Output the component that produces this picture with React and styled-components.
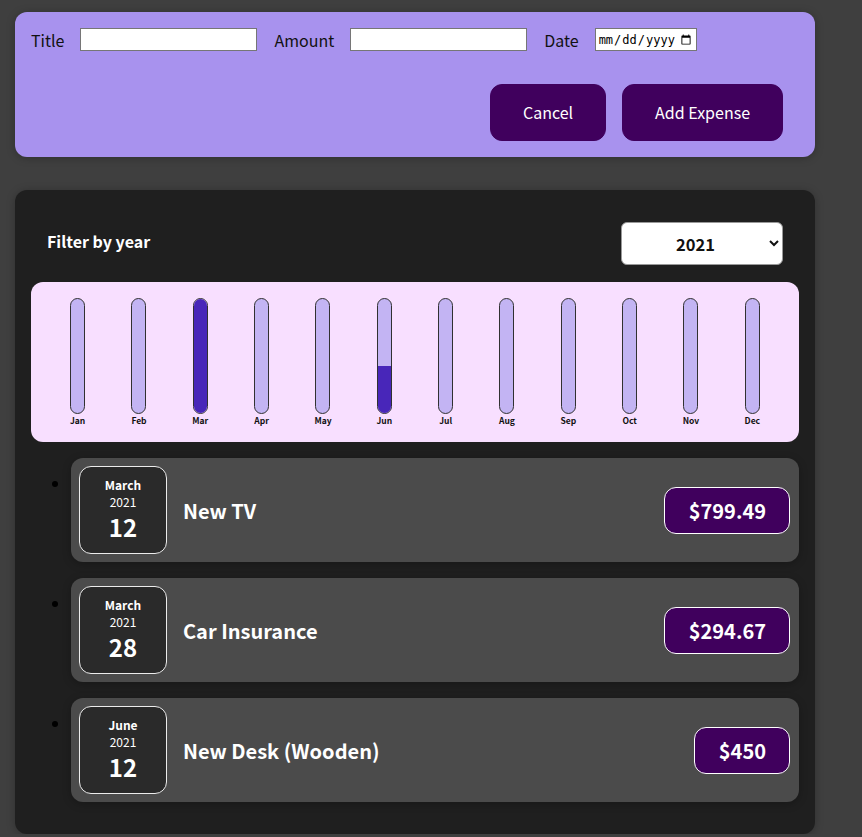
import React from "react";
import styled, { createGlobalStyle } from "styled-components";

const GlobalStyle = createGlobalStyle`
  * { box-sizing: border-box; }
  body {
    margin: 0;
    background: #3f3f3f;
    font-family: "Noto Sans CJK JP", "Noto Sans", sans-serif;
  }
`;

const Page = styled.div`
  width: 800px;
  margin: 12px 0 0 15px;
  display: flex;
  flex-direction: column;
  gap: 33px;
`;

const Card = styled.div`
  border-radius: 12px;
  box-shadow: 0 1px 8px rgba(0, 0, 0, 0.25);
  padding: 16px;
  background: ${p => p.$bg};
`;

const Controls = styled.div`
  display: flex;
  align-items: center;
  gap: 17px;
  height: 23px;
`;

const Control = styled.label`
  display: flex;
  align-items: center;
  gap: 16px;
  font-size: 16px;
  line-height: 23px;
  color: #111;
  padding-top: 2px;
`;

const Input = styled.input`
  height: 23px;
  width: ${p => p.$w}px;
  border: 1px solid #767676;
  background: white;
  padding: 1px 2px;
  font-size: 12px;
  margin-top: -2px;
`;

const Actions = styled.div`
  display: flex;
  justify-content: flex-end;
  gap: 16px;
  margin-top: 33px;
  padding-right: 16px;
`;

const Button = styled.button`
  font-family: inherit;
  font-size: 16px;
  line-height: 25px;
  height: 57px;
  padding: 0 32px;
  background: #40005d;
  border: 1px solid #40005d;
  color: white;
  border-radius: 12px;
  cursor: pointer;
`;

const FilterRow = styled.div`
  display: flex;
  justify-content: space-between;
  align-items: center;
  padding: 0 16px;
  margin: 16px 0 17px;
  color: white;
`;

const FilterLabel = styled.span`
  font-weight: bold;
  font-size: 16px;
  padding-bottom: 5px;
`;

const Select = styled.select`
  width: 162px;
  height: 43px;
  font-family: inherit;
  font-size: 16.5px;
  font-weight: bold;
  padding: 0 30px 0 50px;
  border-radius: 6px;
  border: 1px solid #999;
  background: white;
  color: #111;
`;

const Chart = styled.div`
  height: 160px;
  padding: 16px;
  border-radius: 12px;
  background: #f8dfff;
  display: grid;
  grid-template-columns: repeat(12, 1fr);
`;

const BarCol = styled.div`
  display: flex;
  flex-direction: column;
  align-items: center;
  height: 100%;
`;

const BarTrack = styled.div`
  flex: 1;
  width: 15px;
  border: 1px solid #313131;
  border-radius: 12px;
  background: #c3b4f3;
  overflow: hidden;
  display: flex;
  flex-direction: column;
  justify-content: flex-end;
`;

const BarFill = styled.div`
  width: 100%;
  background: #4826b9;
`;

const BarLabel = styled.div`
  font-weight: bold;
  font-size: 8.5px;
  line-height: 12px;
  color: #111;
`;

const List = styled.ul`
  margin: 16px 0;
  padding-left: 40px;
`;

const Item = styled.li`
  margin: 16px 0;
`;

const ItemCard = styled.div`
  display: flex;
  align-items: center;
  gap: 16px;
  padding: 8px;
  height: 104px;
  background: #4b4b4b;
  border-radius: 12px;
  box-shadow: 0 2px 8px rgba(0, 0, 0, 0.25);
`;

const DateBox = styled.div`
  width: 88px;
  height: 88px;
  flex-shrink: 0;
  display: flex;
  flex-direction: column;
  justify-content: center;
  align-items: center;
  border: 1px solid #ececec;
  border-radius: 12px;
  background: #2a2a2a;
  color: white;
`;

const Month = styled.div`
  font-size: 12px;
  font-weight: bold;
  line-height: 17px;
`;

const Year = styled.div`
  font-size: 12px;
  line-height: 17px;
`;

const Day = styled.div`
  font-size: 24px;
  font-weight: bold;
  line-height: 34px;
`;

const Title = styled.h2`
  flex: 1;
  margin: 0;
  font-size: 20px;
  color: white;
`;

const Price = styled.div`
  font-size: 20px;
  font-weight: bold;
  line-height: 31px;
  color: white;
  background: #40005d;
  border: 1px solid white;
  border-radius: 12px;
  padding: 7px 23px 7px 24px;
  margin-right: 1px;
`;

const months = ["Jan", "Feb", "Mar", "Apr", "May", "Jun", "Jul", "Aug", "Sep", "Oct", "Nov", "Dec"];

const expenses = [
  { title: "New TV", amount: "$799.49", month: "March", day: 12 },
  { title: "Car Insurance", amount: "$294.67", month: "March", day: 28 },
  { title: "New Desk (Wooden)", amount: "$450", month: "June", day: 12 },
];

const fills = [0, 0, 100, 0, 0, 41, 0, 0, 0, 0, 0, 0];

export default function App() {
  return (
    <>
      <GlobalStyle />
      <Page>
        <Card $bg="#a892ee">
          <Controls>
            <Control>
              Title
              <Input type="text" $w={177} />
            </Control>
            <Control>
              Amount
              <Input type="text" $w={177} />
            </Control>
            <Control>
              Date
              <Input type="date" $w={102} />
            </Control>
          </Controls>
          <Actions>
            <Button>Cancel</Button>
            <Button>Add Expense</Button>
          </Actions>
        </Card>
        <Card $bg="#1f1f1f">
          <FilterRow>
            <FilterLabel>Filter by year</FilterLabel>
            <Select defaultValue="2021">
              <option>2022</option>
              <option>2021</option>
              <option>2020</option>
              <option>2019</option>
            </Select>
          </FilterRow>
          <Chart>
            {months.map((m, i) => (
              <BarCol key={m}>
                <BarTrack>
                  <BarFill style={{ height: `${fills[i]}%` }} />
                </BarTrack>
                <BarLabel>{m}</BarLabel>
              </BarCol>
            ))}
          </Chart>
          <List>
            {expenses.map(e => (
              <Item key={e.title}>
                <ItemCard>
                  <DateBox>
                    <Month>{e.month}</Month>
                    <Year>2021</Year>
                    <Day>{e.day}</Day>
                  </DateBox>
                  <Title>{e.title}</Title>
                  <Price>{e.amount}</Price>
                </ItemCard>
              </Item>
            ))}
          </List>
        </Card>
      </Page>
    </>
  );
}
